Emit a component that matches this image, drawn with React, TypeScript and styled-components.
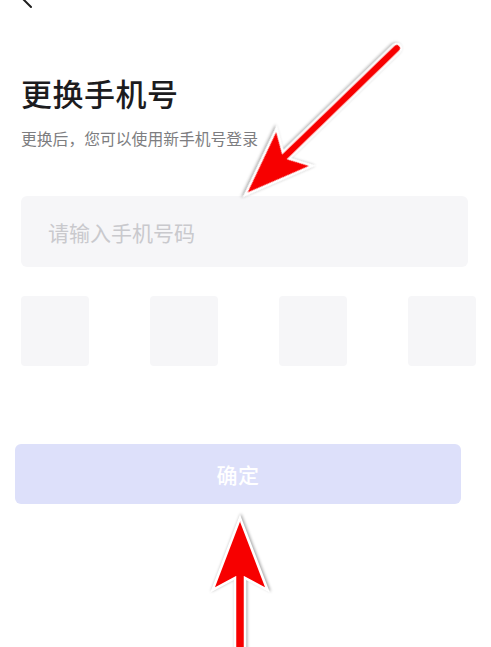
import React from "react";
import styled, { createGlobalStyle } from "styled-components";

const GlobalStyle = createGlobalStyle`
  html, body {
    margin: 0;
    padding: 0;
    background: #ffffff;
  }
  body {
    font-family: "Noto Sans CJK SC", "Noto Sans", sans-serif;
  }
  * { box-sizing: border-box; }
`;

const Screen = styled.div`
  position: relative;
  width: 491px;
  height: 647px;
  overflow: hidden;
  background: #ffffff;
`;

const Content = styled.div`
  display: flex;
  flex-direction: column;
  padding-left: 21px;
`;

const Header = styled.div`
  height: 48px;
  margin-top: -37px;
  margin-left: -7px;
  display: flex;
  align-items: flex-end;
`;

const BackIcon = styled.svg`
  display: block;
  width: 24px;
  height: 24px;
`;

const Title = styled.h1`
  margin: 62px 0 0;
  font-size: 31px;
  line-height: 40px;
  font-weight: 500;
  color: #1c1c1e;
  letter-spacing: 0.5px;
`;

const Subtitle = styled.p`
  margin: 15px 0 0;
  font-size: 15.8px;
  line-height: 22px;
  color: #7d7d80;
`;

const PhoneInput = styled.input`
  margin-top: 46px;
  width: 447px;
  height: 71px;
  border: none;
  outline: none;
  border-radius: 6px;
  background: #f6f6f8;
  padding: 0 0 0 27px;
  font-family: inherit;
  font-size: 21px;
  color: #222;
  &::placeholder {
    color: #c9c9cd;
  }
`;

const CodeRow = styled.div`
  margin-top: 29px;
  width: 455px;
  display: flex;
  justify-content: space-between;
`;

const CodeBox = styled.div`
  width: 68px;
  height: 70px;
  border-radius: 4px;
  background: #f6f6f8;
`;

const ConfirmButton = styled.button<{ $disabled?: boolean }>`
  margin-top: 78px;
  margin-left: -6px;
  width: 446px;
  height: 60px;
  border: none;
  border-radius: 6px;
  background: ${(p) => (p.$disabled ? "#dde0fa" : "#5a64f0")};
  color: #ffffff;
  font-family: inherit;
  font-size: 21px;
  font-weight: 500;
  letter-spacing: 0.5px;
  padding: 0;
`;

const Overlay = styled.svg`
  position: absolute;
  left: 0;
  top: 0;
  width: 491px;
  height: 647px;
  pointer-events: none;
  overflow: visible;
`;

const arrowPath = (
  length: number,
  half: number,
  headLen: number,
  notch: number,
  headHalf: number
) =>
  `M0 0 L${-headLen} ${-headHalf} L${-notch} ${-half} L${-length} ${-half} ` +
  `A${half} ${half} 0 0 0 ${-length} ${half} L${-notch} ${half} L${-headLen} ${headHalf} Z`;

const Arrow: React.FC<{ x: number; y: number; angle: number; d: string }> = ({
  x,
  y,
  angle,
  d,
}) => (
  <g transform={`translate(${x} ${y}) rotate(${angle})`}>
    <path
      d={d}
      fill="#f70000"
      stroke="#ffffff"
      strokeWidth={2.6}
      strokeLinejoin="miter"
      style={{ filter: "drop-shadow(1px 1.5px 1.5px rgba(0,0,0,0.35))" }}
    />
  </g>
);

export default function App() {
  const codes = [0, 1, 2, 3];
  return (
    <>
      <GlobalStyle />
      <Screen>
        <Content>
          <Header>
            <BackIcon viewBox="0 0 24 24" fill="none">
              <path
                d="M17 4 L9 12 L17 20"
                stroke="#1f1f1f"
                strokeWidth={2}
                strokeLinecap="round"
                strokeLinejoin="round"
              />
            </BackIcon>
          </Header>
          <Title>更换手机号</Title>
          <Subtitle>更换后，您可以使用新手机号登录</Subtitle>
          <PhoneInput placeholder="请输入手机号码" />
          <CodeRow>
            {codes.map((c) => (
              <CodeBox key={c} />
            ))}
          </CodeRow>
          <ConfirmButton $disabled>确定</ConfirmButton>
        </Content>
        <Overlay viewBox="0 0 491 647">
          <Arrow x={245} y={195} angle={135.96} d={arrowPath(211, 4.5, 69, 57, 26)} />
          <Arrow x={240} y={518} angle={-90} d={arrowPath(160, 5, 72, 60, 27.5)} />
        </Overlay>
      </Screen>
    </>
  );
}
